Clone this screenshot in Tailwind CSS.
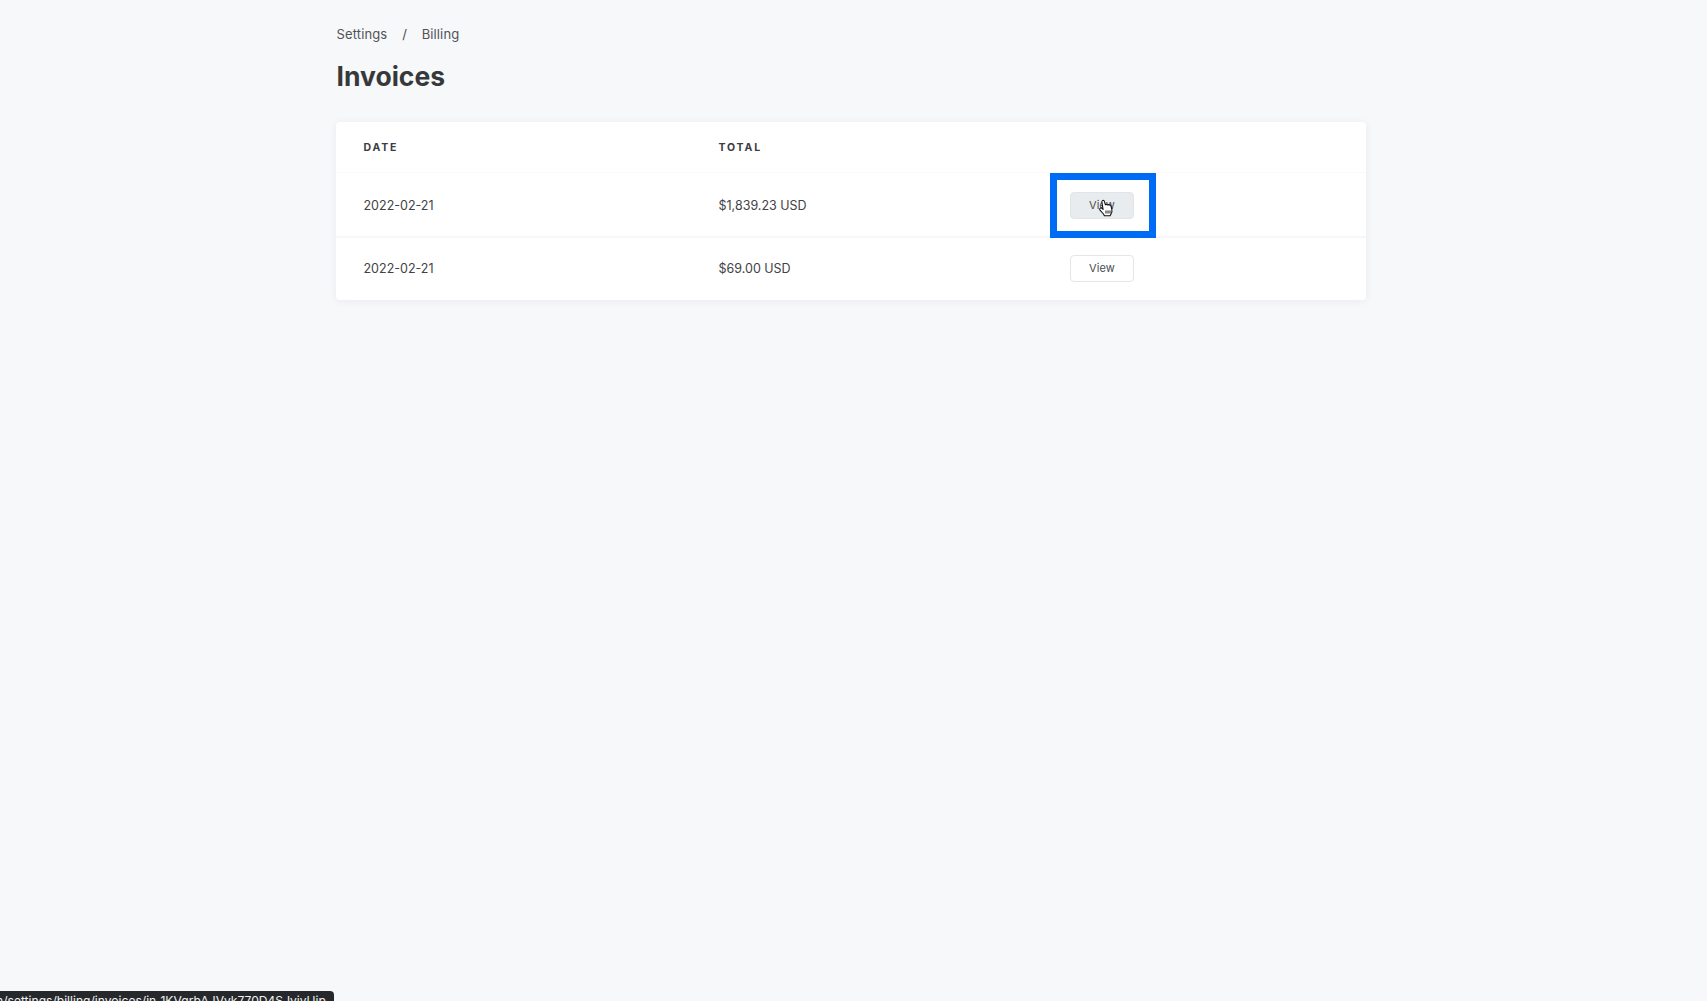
<!DOCTYPE html>
<html lang="en">
<head>
<meta charset="utf-8">
<title>Invoices</title>
<script src="https://cdn.jsdelivr.net/npm/@tailwindcss/browser@4"></script>
</head>
<body class="bg-[#f7f8fa] font-['Inter',sans-serif] text-[#37393c] overflow-hidden">
<div class="relative w-[1707px] h-[1001px] overflow-hidden">
  <main class="w-[1030px] ml-[336px] pt-[25px]">
    <nav class="flex items-center h-[18px] pl-[0.5px] text-[13px] tracking-[0.01em] leading-[18px] text-[#4f5458]">
      <span>Settings</span>
      <span class="ml-[15px] text-[#4a4d50]">/</span>
      <span class="ml-[14.5px]">Billing</span>
    </nav>
    <h1 class="mt-[15px] h-[36px] pl-[0.5px] text-[26.5px] leading-[36px] font-bold text-[#36383b]">Invoices</h1>
    <section class="relative mt-[28px] bg-white rounded-[4px] shadow-[0_1px_8px_rgba(30,40,60,0.06)] text-[12.5px] text-[#3f4246]">
      <div class="grid grid-cols-[355px_352px_323px] items-center h-[51px] pt-[2px] border-b border-[#fafafa] text-[10.5px] font-bold tracking-[0.175em] text-[#3a3c3f]">
        <span class="pl-[27.5px]">DATE</span>
        <span class="pl-[27.5px]">TOTAL</span>
        <span></span>
      </div>
      <div class="grid grid-cols-[355px_352px_323px] items-center h-[65px] pt-[3px] border-b-2 border-[#f6f7f8]">
        <span class="pl-[27.5px]">2022-02-21</span>
        <span class="pl-[27.5px]">$1,839.23 USD</span>
        <div class="pl-[27px] -mt-[2px]"><span class="flex items-center justify-center w-[64px] h-[27px] rounded-[4px] border border-[#e2e5e8] bg-[#e9ecee] text-[11px] tracking-[0.01em] text-[#4a4d50]">View</span></div>
      </div>
      <div class="grid grid-cols-[355px_352px_323px] items-center h-[62px] pt-[1px]">
        <span class="pl-[27.5px]">2022-02-21</span>
        <span class="pl-[27.5px]">$69.00 USD</span>
        <div class="pl-[27px] -mt-[3px]"><span class="flex items-center justify-center w-[64px] h-[27px] rounded-[4px] border border-[#e4e6e8] bg-white text-[11px] tracking-[0.01em] text-[#4a4d50]">View</span></div>
      </div>
      <div class="absolute left-[714px] top-[51px] w-[106px] h-[65px] border-[7px] border-[#006cf5]"></div>
      <svg class="absolute left-[762px] top-[77px]" width="16" height="19" viewBox="0 0 16 19">
        <path d="M4.5 1.6c.8-.5 1.7 0 1.9.8l1 3.4c.4-.6 1.5-.6 1.9.1.4-.5 1.4-.4 1.8.2.5-.4 1.4-.2 1.7.5l1 3.6c.4 1.6.1 3.5-.9 5l-.8 1.6H6.4l-.9-1.8L2 11.1c-.5-.7-.3-1.6.3-2 .6-.4 1.3-.2 1.8.3l1 1.1L3.9 3c-.2-.6.1-1.1.6-1.4z" fill="#fff" stroke="#111" stroke-width="1.1" stroke-linejoin="round"/>
        <path d="M8 11.5v3M10 11.5v3M12 11.5v3" stroke="#111" stroke-width="1" fill="none"/>
      </svg>
    </section>
  </main>
  <div class="absolute left-0 bottom-0 w-[334px] h-[10px] overflow-hidden rounded-tr-[4px] bg-[#26282b] whitespace-nowrap text-[12.1px] leading-[16px] text-[#f2f2f2]"><span class="block mt-[2px] -ml-[4px]">n/settings/billing/invoices/in_1KVgrbAJVvk770D4SJvjyUjp</span></div>
</div>
</body>
</html>
